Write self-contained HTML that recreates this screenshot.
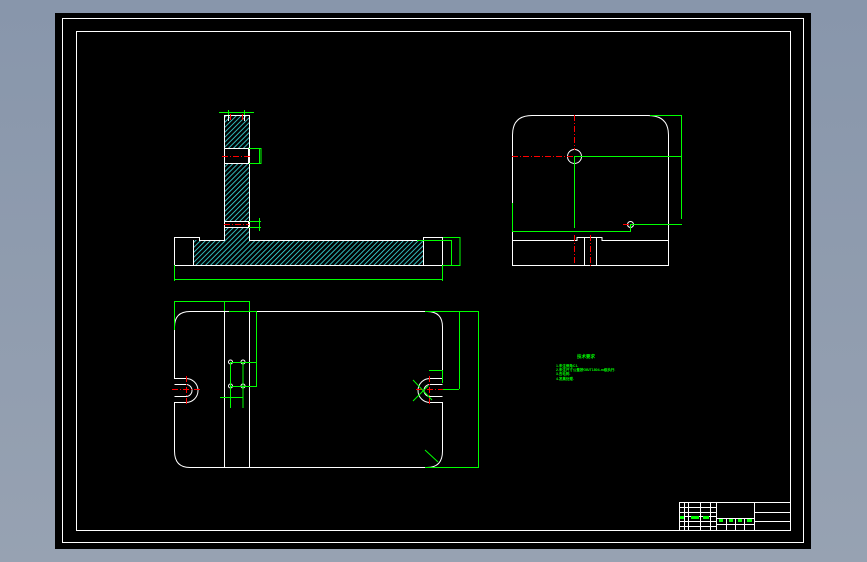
<!DOCTYPE html>
<html><head><style>
html,body{margin:0;padding:0;width:867px;height:562px;overflow:hidden;background:linear-gradient(#8896ab,#97a2b2);}
svg{position:absolute;left:0;top:0}
</style></head><body>
<svg width="867" height="562" viewBox="0 0 867 562" font-family="Liberation Sans, sans-serif">
<defs>
<pattern id="h" width="3.5" height="3.5" patternUnits="userSpaceOnUse" patternTransform="rotate(45)">
<rect width="3.5" height="3.5" fill="#000"/><line x1="0" y1="0" x2="0" y2="3.5" stroke="#3ee8e8" stroke-width="1.6"/>
</pattern>
</defs>
<rect x="55" y="13" width="756" height="536" fill="#000"/>
<rect x="62.5" y="18.5" width="741" height="524" fill="none" stroke="#fff" stroke-width="1"/>
<rect x="76.5" y="31.5" width="714" height="499" fill="none" stroke="#fff" stroke-width="1"/>

<!-- front view -->
<g stroke="#fff" stroke-width="1" fill="none">
<rect x="224" y="115" width="25" height="125" fill="url(#h)" stroke="none"/>
<rect x="193" y="240" width="230" height="25" fill="url(#h)" stroke="none"/>
<rect x="224.5" y="148.5" width="24" height="15" fill="#000"/>
<rect x="224.5" y="221.5" width="24" height="6" fill="#000"/>
<path d="M224.5 115.5H249.5V240.5H423.5V237.5H442.5V265.5H174.5V237.5H199.5V240.5H224.5Z"/>
<line x1="193.5" y1="240" x2="193.5" y2="265"/>
<line x1="423.5" y1="240" x2="423.5" y2="265"/>
<line x1="228.5" y1="115" x2="228.5" y2="121"/><line x1="244.5" y1="115" x2="244.5" y2="121"/>
</g>
<g stroke="#f00" stroke-width="1" stroke-dasharray="6 2 1 2">
<line x1="222" y1="156.5" x2="251" y2="156.5"/><line x1="224" y1="224.5" x2="249" y2="224.5"/>
<line x1="230.5" y1="114" x2="230.5" y2="122"/><line x1="242.5" y1="114" x2="242.5" y2="122"/>
</g>
<g stroke="#0f0" stroke-width="1" fill="none">
<path d="M219 112.5H254M228.5 110v5M244.5 110v5"/>
<path d="M249 148.5H261V163.5H249M259.5 148v16"/>
<path d="M249 221.5H261M249 227.5H261M259.5 218v13"/>
<path d="M174.5 265v16M442.5 265v16M174 279.5H443"/>
<path d="M443 237.5H460V265.5H443M451.5 240v25M417 240.5H452"/>
</g>

<!-- right view -->
<g stroke="#fff" stroke-width="1" fill="none">
<path d="M512.5 265.5V135Q512.5 115.5 532 115.5H648Q668.5 115.5 668.5 135V265.5Z"/>
<path d="M512.5 240.5H577V237.5H602V240.5H668.5"/>
<path d="M584.5 237.5V265M596.5 237.5V265"/>
<circle cx="574.5" cy="156.5" r="7"/><circle cx="630.5" cy="224.5" r="3"/>
</g>
<g stroke="#f00" stroke-width="1" stroke-dasharray="6 2 1 2">
<line x1="512" y1="156.5" x2="574" y2="156.5"/><line x1="574.5" y1="115" x2="574.5" y2="150"/>
<line x1="574.5" y1="235" x2="574.5" y2="265"/><line x1="590.5" y1="235" x2="590.5" y2="267"/>
<line x1="623" y1="224.5" x2="637" y2="224.5"/>
</g>
<g stroke="#0f0" stroke-width="1" fill="none">
<path d="M574.5 156.5H682M574.5 156v72M650 115.5H682M681.5 115v104M630 224.5H682"/>
<path d="M512.5 203V231.5H630.5V225"/>
</g>

<!-- bottom view -->
<g stroke="#fff" stroke-width="1" fill="none">
<path d="M190 311.5H427Q442.5 311.5 442.5 327V378.5H430M430 402.5H442.5V451Q442.5 467.5 427 467.5H190Q174.5 467.5 174.5 451V402.5H186M186 378.5H174.5V327Q174.5 311.5 190 311.5"/>
<path d="M186 378.5A12 12 0 0 1 186 402.5M186 384.5A6 6 0 0 1 186 396.5M174.5 384.5H186M174.5 396.5H186"/>
<path d="M430 378.5A12 12 0 0 0 430 402.5M430 384.5A6 6 0 0 0 430 396.5M442.5 384.5H430M442.5 396.5H430"/>
<line x1="224.5" y1="311" x2="224.5" y2="467"/><line x1="249.5" y1="311" x2="249.5" y2="467"/>
<circle cx="230.5" cy="362" r="2"/><circle cx="243" cy="362" r="2"/><circle cx="230.5" cy="386" r="2"/><circle cx="243" cy="386" r="2"/>
</g>
<g stroke="#f00" stroke-width="1" stroke-dasharray="6 2 1 2">
<line x1="172" y1="389.5" x2="201" y2="389.5"/><line x1="186.5" y1="376" x2="186.5" y2="405"/>
<line x1="416" y1="389.5" x2="444" y2="389.5"/><line x1="429.5" y1="376" x2="429.5" y2="404"/>
</g>
<g stroke="#0f0" stroke-width="1" fill="none">
<path d="M174.5 330V301.5H249.5V311M224.5 301v10M229 311.5H256.5V387M230.5 362.5H257M230.5 386.5H257M230.5 362v46M243 362v46M220 397.5H243"/>
<path d="M425 311.5H478.5V467.5H425M459.5 311v78M443 389.5H459M429 370.5H442.5V383"/>
<path d="M413 380L432 400M413 401L428 386M425 450L438 462"/>
</g>

<!-- notes -->
<g fill="#0f0" font-size="4.5" font-weight="bold">
<text x="577" y="358">技术要求</text>
<text x="556" y="367" font-size="3.5">1.未注倒角C1.</text>
<text x="556" y="371" font-size="3.5">2.未注尺寸公差按GB/T1804-m级执行.</text>
<text x="556" y="375" font-size="3.5">3.去毛刺.</text>
<text x="556" y="380" font-size="3.5">4.发黑处理.</text>
</g>

<!-- title block -->
<g stroke="#fff" stroke-width="1" fill="none">
<rect x="679.5" y="502.5" width="111" height="28"/>
<line x1="716.5" y1="502" x2="716.5" y2="530"/>
<line x1="754.5" y1="502" x2="754.5" y2="530"/>
<line x1="716.5" y1="518.5" x2="754.5" y2="518.5"/>
<line x1="754.5" y1="512.5" x2="790.5" y2="512.5"/>
<line x1="754.5" y1="521.5" x2="790.5" y2="521.5"/>
<path d="M679.5 507.5H716.5M679.5 512.5H716.5M679.5 516.5H716.5M679.5 521.5H716.5M679.5 526.5H716.5"/>
<path d="M684.5 502v28M688.5 502v28M700.5 502v28M710.5 502v28"/>
<path d="M716.5 524.5H754.5M726.5 518v12M735.5 518v12M744.5 518v12"/>
</g>
<g fill="#0f0">
<rect x="680" y="516" width="4" height="3"/><rect x="691" y="516" width="8" height="3"/><rect x="703" y="516" width="6" height="3"/>
<rect x="719" y="519" width="4" height="3"/><rect x="729" y="519" width="4" height="3"/><rect x="738" y="519" width="4" height="3"/><rect x="747" y="519" width="5" height="3"/>
</g>
</svg>
</body></html>
